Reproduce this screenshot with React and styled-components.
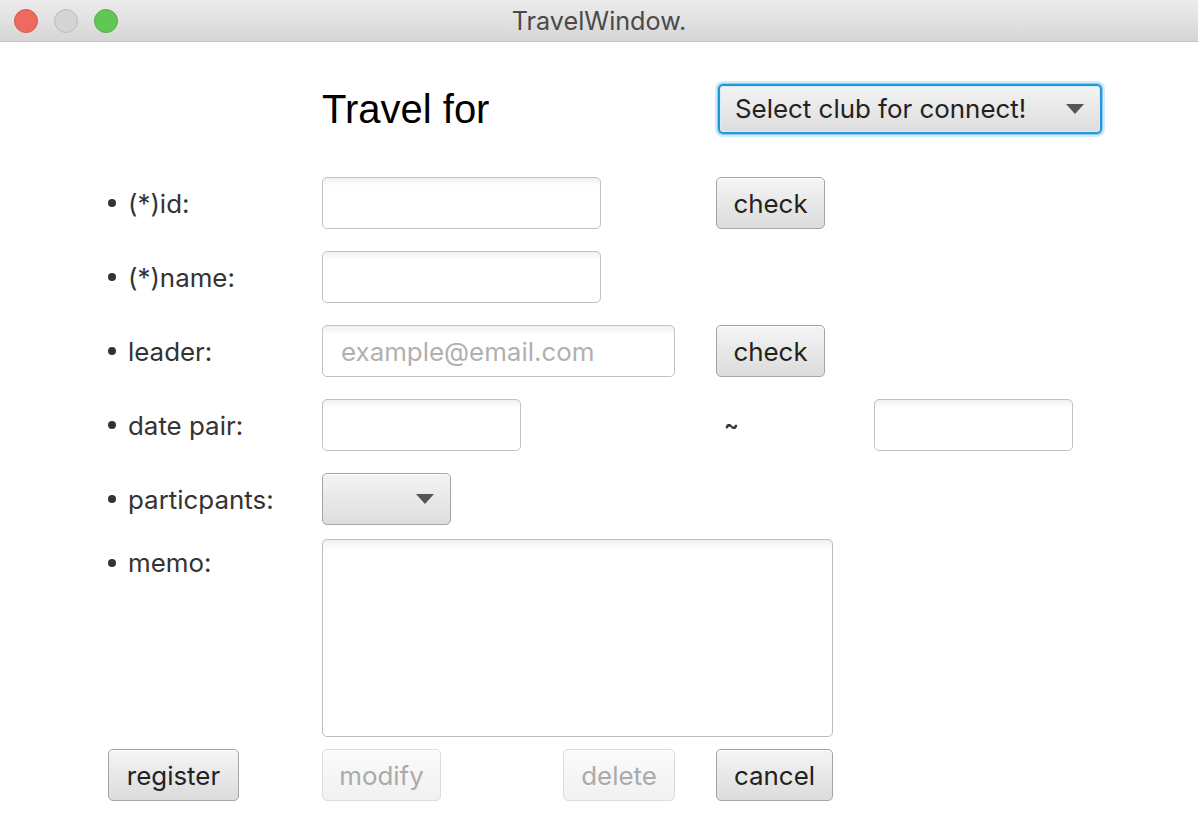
import React from "react";
import styled, { createGlobalStyle, css } from "styled-components";

const Global = createGlobalStyle`
  html, body { margin: 0; padding: 0; background: #ffffff; }
  body { font-family: Inter, "Open Sans", sans-serif; }
  * { box-sizing: border-box; }
`;

const Window = styled.div`
  width: 1198px;
  height: 838px;
  background: #ffffff;
  display: flex;
  flex-direction: column;
`;

const TitleBar = styled.div`
  height: 42px;
  flex: none;
  display: flex;
  align-items: center;
  position: relative;
  background: linear-gradient(#ececec, #d6d6d6);
  border-bottom: 1px solid #c4c4c4;
`;

const Lights = styled.div`
  display: flex;
  gap: 16px;
  padding-left: 14px;
`;

const Light = styled.span`
  width: 24px;
  height: 24px;
  border-radius: 50%;
  background: ${(p) => p.$bg};
  border: 1px solid ${(p) => p.$bd};
`;

const Title = styled.div`
  position: absolute;
  left: 0;
  right: 0;
  text-align: center;
  font-size: 25.2px;
  color: #4a4a4a;
  pointer-events: none;
`;

const Form = styled.div`
  display: grid;
  grid-template-columns: 214px 394px 158px 1fr;
  grid-template-rows: 115px repeat(5, 74px) 207px 64px;
  align-items: center;
  padding: 9px 0 0 108px;
`;

const Heading = styled.div`
  grid-column: 2;
  font-family: "Liberation Sans", Arial, sans-serif;
  font-size: 40px;
  color: #000;
  line-height: 1;
`;

const Label = styled.div`
  grid-column: 1;
  display: flex;
  align-items: center;
  font-size: 25.9px;
  color: #333;
  ${(p) =>
    p.$top &&
    css`
      align-self: start;
      margin-top: 11px;
    `}
`;

const Bullet = styled.span`
  width: 8px;
  height: 8px;
  border-radius: 50%;
  background: #333;
  margin-right: 12px;
`;

const Input = styled.div`
  grid-column: ${(p) => p.$col || 2};
  width: ${(p) => p.$w}px;
  height: 52px;
  border: 1px solid #c2c2c2;
  border-radius: 5px;
  background: linear-gradient(#f0f0f0, #ffffff 8px);
  display: flex;
  align-items: center;
  padding-left: 18px;
  font-size: 25.9px;
  color: #b0b0b0;
`;

const TextArea = styled.div`
  grid-column: 2 / 4;
  align-self: start;
  margin-top: 3px;
  width: 511px;
  height: 198px;
  border: 1px solid #bdbdbd;
  border-radius: 5px;
  background: linear-gradient(#f0f0f0, #ffffff 9px);
`;

const Button = styled.button`
  grid-column: ${(p) => p.$col || "auto"};
  justify-self: start;
  width: ${(p) => p.$w}px;
  height: 52px;
  padding: 0;
  border-radius: 5px;
  font-family: inherit;
  font-size: 25.9px;
  border: 1px solid ${(p) => (p.disabled ? "#dcdcdc" : "#a4a4a4")};
  color: ${(p) => (p.disabled ? "#aaaaaa" : "#222")};
  background: ${(p) =>
    p.disabled
      ? "linear-gradient(#fbfbfb, #f1f1f1)"
      : "linear-gradient(#f5f5f5, #dcdcdc)"};
  box-shadow: inset 0 1px 0 #ffffff;
`;

const Combo = styled.div`
  grid-column: ${(p) => p.$span || 2};
  justify-self: start;
  width: ${(p) => p.$w}px;
  height: ${(p) => p.$h || 52}px;
  margin-left: ${(p) => p.$ml || 0}px;
  border-radius: 5px;
  display: flex;
  align-items: center;
  justify-content: space-between;
  padding: 0 16px 0 ${(p) => (p.$focus ? 15 : 0)}px;
  font-size: 25.9px;
  color: #222;
  background: linear-gradient(#f4f4f4, #dddddd);
  border: 1px solid #a4a4a4;
  box-shadow: inset 0 1px 0 #fff;
  ${(p) =>
    p.$focus &&
    css`
      border: 2px solid #1f9ad8;
      box-shadow: inset 0 0 0 1px #d6ecf8, 0 0 0 1px #8ccbee, 0 0 0 3px #d4ebf8;
    `}
`;

const Arrow = styled.span`
  margin-left: auto;
  width: 0;
  height: 0;
  border-left: 9px solid transparent;
  border-right: 9px solid transparent;
  border-top: 10px solid #555;
`;

const Tilde = styled.div`
  grid-column: 3;
  padding-left: 8px;
  font-size: 22px;
  color: #333;
  font-weight: 600;
`;

const ActionGroup = styled.div`
  grid-column: 2;
  display: flex;
  justify-content: space-between;
  padding-right: 41px;
`;

export default function App() {
  return (
    <>
      <Global />
      <Window>
        <TitleBar>
          <Lights>
            <Light $bg="#ef6a5e" $bd="#d8574c" />
            <Light $bg="#d4d4d4" $bd="#bdbdbd" />
            <Light $bg="#62c655" $bd="#52ae45" />
          </Lights>
          <Title>TravelWindow.</Title>
        </TitleBar>
        <Form>
          <Heading>Travel for</Heading>
          <Combo $span="3 / 5" $w={384} $h={50} $ml={2} $focus>
            Select club for connect!
            <Arrow />
          </Combo>

          <Label><Bullet />(*)id:</Label>
          <Input $w={279} />
          <Button $col={3} $w={109}>check</Button>

          <Label><Bullet />(*)name:</Label>
          <Input $w={279} />

          <Label><Bullet />leader:</Label>
          <Input $w={353}>example@email.com</Input>
          <Button $col={3} $w={109}>check</Button>

          <Label><Bullet />date pair:</Label>
          <Input $w={199} />
          <Tilde>~</Tilde>
          <Input $col={4} $w={199} />

          <Label><Bullet />particpants:</Label>
          <Combo $w={129}>
            <Arrow />
          </Combo>

          <Label $top><Bullet />memo:</Label>
          <TextArea />

          <Button $col={1} $w={131}>register</Button>
          <ActionGroup>
            <Button $w={119} disabled>modify</Button>
            <Button $w={112} disabled>delete</Button>
          </ActionGroup>
          <Button $col={3} $w={117}>cancel</Button>
        </Form>
      </Window>
    </>
  );
}
